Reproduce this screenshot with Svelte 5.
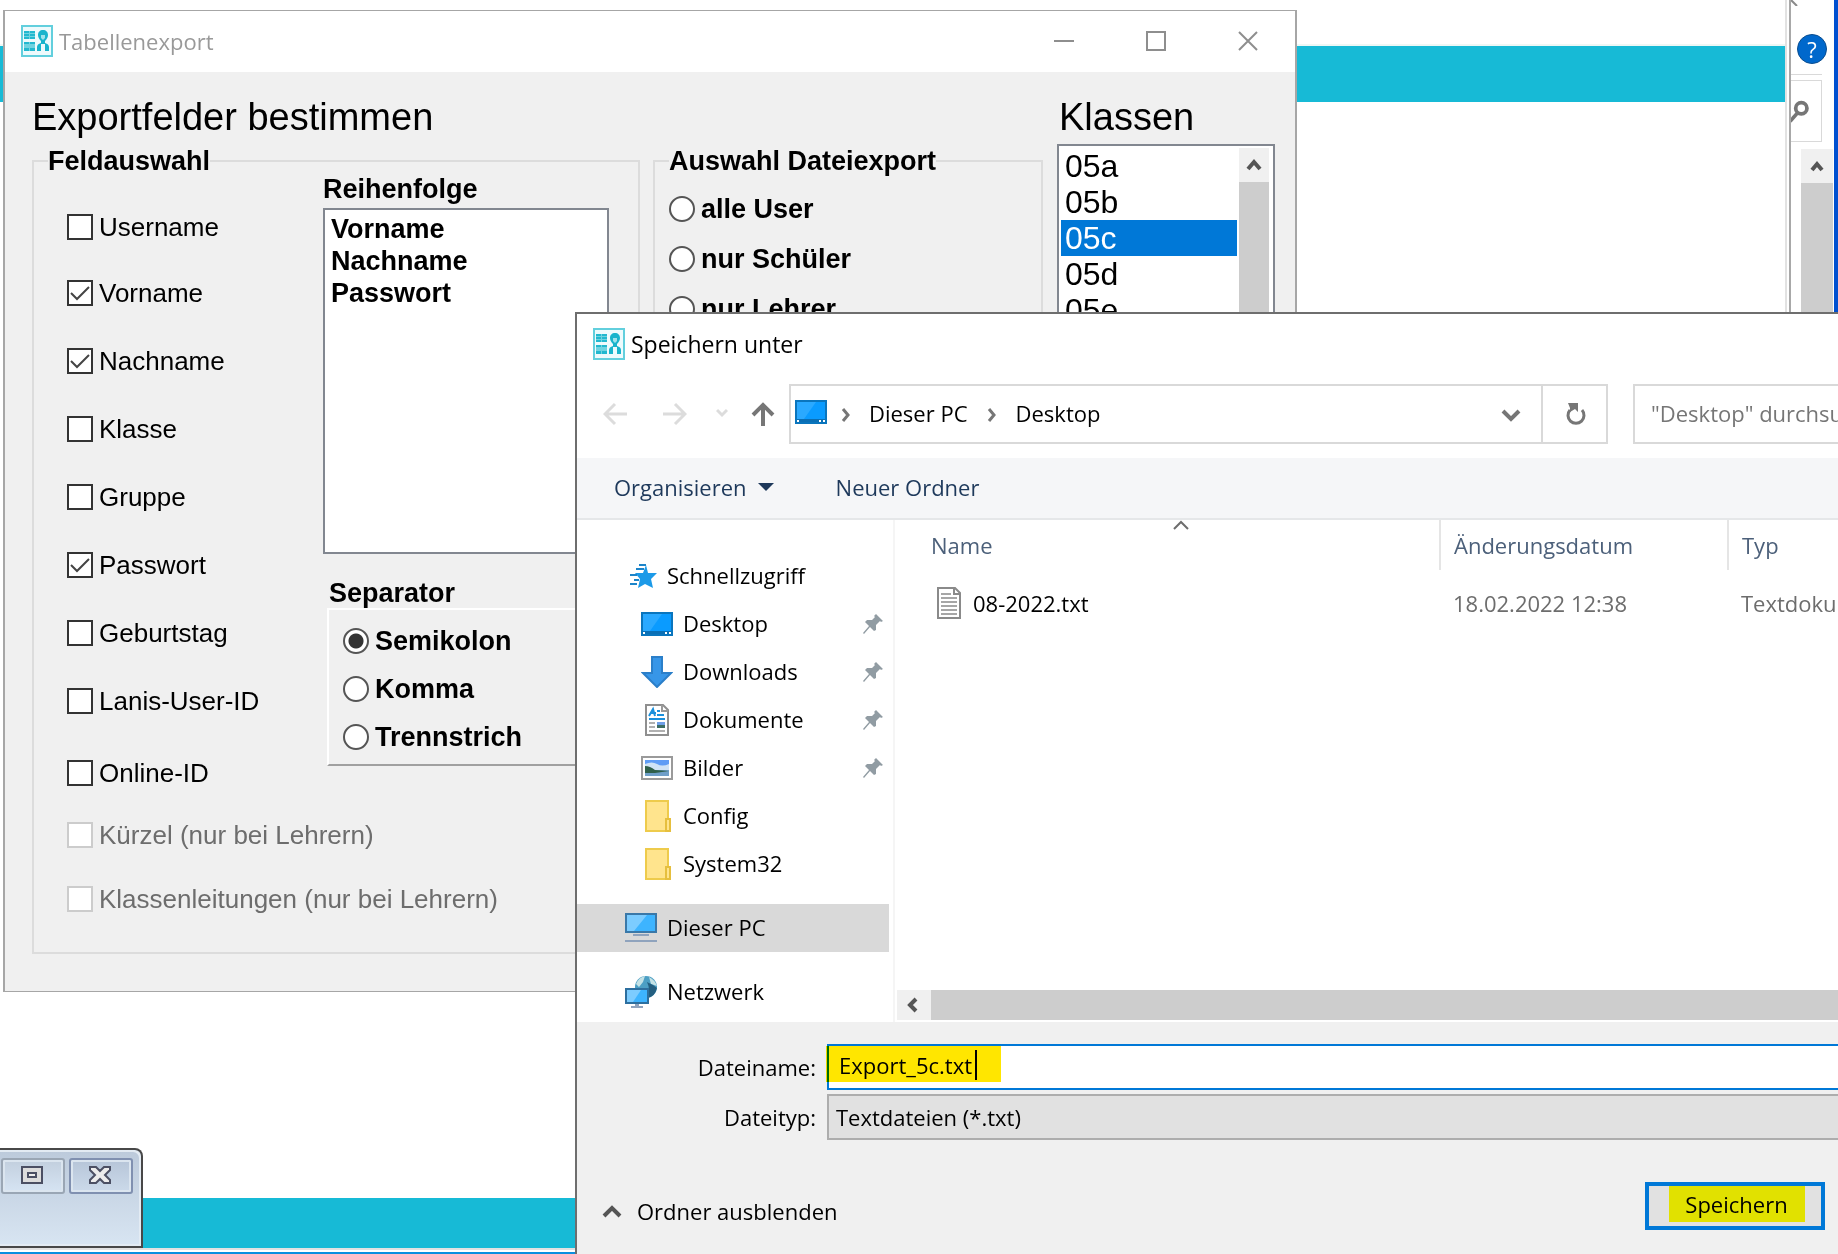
<script>
  const fields = $state([
    { label: 'Username', checked: false },
    { label: 'Vorname', checked: true },
    { label: 'Nachname', checked: true },
    { label: 'Klasse', checked: false },
    { label: 'Gruppe', checked: false },
    { label: 'Passwort', checked: true },
    { label: 'Geburtstag', checked: false },
    { label: 'Lanis-User-ID', checked: false },
    { label: 'Online-ID', checked: false },
    { label: 'Kürzel (nur bei Lehrern)', checked: false, disabled: true },
    { label: 'Klassenleitungen (nur bei Lehrern)', checked: false, disabled: true }
  ])
  const order = ['Vorname', 'Nachname', 'Passwort']
  const separators = ['Semikolon', 'Komma', 'Trennstrich']
  const targets = ['alle User', 'nur Schüler', 'nur Lehrer']
  const classes = ['05a', '05b', '05c', '05d', '05e']

  let separator = $state('Semikolon')
  let target = $state('')
  let current = $state('05c')
  let filename = $state('Export_5c.txt')

  const quick = [
    { label: 'Desktop', icon: 'desktop', pinned: true },
    { label: 'Downloads', icon: 'download', pinned: true },
    { label: 'Dokumente', icon: 'document', pinned: true },
    { label: 'Bilder', icon: 'picture', pinned: true },
    { label: 'Config', icon: 'folder' },
    { label: 'System32', icon: 'folder' }
  ]
  const files = [{ name: '08-2022.txt', date: '18.02.2022 12:38', type: 'Textdokument' }]
</script>

{#snippet appIcon()}
  <svg class="icon" viewBox="0 0 32 32" aria-hidden="true">
    <rect x="1" y="1" width="30" height="30" fill="#eefafc" stroke="#62cfdd" stroke-width="2" />
    <path fill="#6fd3e0" d="M3 6h11v8H3zM3 17h11v9H3z" />
    <path fill="#22b8cf" d="M3 6h5v2H3zM9 6h5v2H9zM3 9h5v2H3zM9 9h5v2H9zM3 12h5v2H3zM9 12h5v2H9zM3 17h5v2H3zM9 17h5v2H9zM3 23h5v3H3zM9 23h5v3H9z" />
    <!-- head, neck and the open jacket -->
    <path fill="#19b4cc" d="M22 5c3 0 5 2 5 5 0 2-1 4-3 6v3h-4v-3c-2-2-3-4-3-6 0-3 2-5 5-5z" />
    <path fill="#9fe2ea" d="M20 10h4v3l-2 2-2-2z" />
    <path fill="#19b4cc" d="M20 18v8h-4v-4q0-3 4-4zM24 18v8h4v-4q0-3-4-4z" />
  </svg>
{/snippet}

{#snippet chevron(d)}
  <svg class="chevron" viewBox="0 0 20 20" aria-hidden="true"><path {d} /></svg>
{/snippet}

{#snippet icon(name)}
  <svg class="icon" viewBox="0 0 32 32" aria-hidden="true">
    {#if name === 'desktop'}
      <rect x="1" y="5" width="30" height="22" fill="#0a9bff" stroke="#0a75bd" stroke-width="2" />
      <path fill="#2aa9ff" d="M2 6h19L9 23H2z" />
      <path fill="#0a6fb5" d="M2 23h28v3H2z" />
      <path fill="#fff" d="M2 24h2v2H2zM24 24h2v2h-2zM28 24h2v2h-2z" />
    {:else if name === 'download'}
      <path fill="#3796e8" stroke="#2b7fc9" stroke-width="2" d="M11 1h10v16h9L16 31 2 17h9z" />
    {:else if name === 'document'}
      <path fill="#fff" stroke="#8f8f8f" stroke-width="2" d="M5 1h17l5 5v25H5z" />
      <path fill="none" stroke="#9a9a9a" stroke-width="2" d="M21 1v6h6" />
      <path fill="none" stroke="#1a90dc" stroke-width="2" d="M8 12l4-7 2 7M9 9h6M16 7h3M16 11h7M8 15h16" />
      <path stroke="#b0b0b0" stroke-width="2" d="M8 19h6M8 23h6M8 27h16" />
      <path fill="#6f9fe8" d="M16 18h8v3h-8z" />
      <path fill="#3d6d63" d="M16 21h8v3h-8z" />
    {:else if name === 'picture'}
      <rect x="1" y="5" width="30" height="22" fill="#fff" stroke="#9a9a9a" stroke-width="2" />
      <path fill="#5f9cf5" d="M4 8h24v8H4z" />
      <path fill="#cfe2f5" d="M4 12q7-3 12 0t12 0v6H4z" />
      <path fill="#6f9fc9" d="M4 18h24v6H4z" />
      <path fill="#2f5f4a" d="M4 14q5 0 10 4l14 1-14 2H4z" />
    {:else if name === 'folder'}
      <path fill="#ffe48d" stroke="#eecb4c" stroke-width="2" d="M5 1h22v30H5z" />
      <path fill="#ffe48d" stroke="#e6bf3e" stroke-width="2" d="M25 19h4v12h-4z" />
    {:else if name === 'star'}
      <path fill="#1c9ae8" d="M21 5l2 8h9l-6 6 2 9-8-4-7 4 2-9-5-6h8z" />
      <path stroke="#1c84c9" stroke-width="2" d="M14 5h7M11 9h8M5 15h7M9 20h5M5 24h7" />
    {:else if name === 'pc'}
      <rect x="1" y="2" width="30" height="18" fill="#3db4ff" stroke="#3a78a8" stroke-width="2" />
      <path fill="#7cccff" d="M2 3h20L9 19H2z" />
      <path fill="#8fa3bd" d="M8 22h16v2H8zM0 28h32v2H0z" />
    {:else if name === 'network'}
      <circle cx="21" cy="11" r="11" fill="#4c9fc4" />
      <path fill="#c4e2e6" d="M11 8q3-7 9-8l-2 6-4 5zM24 1q6 3 8 9l-6-2z" />
      <path fill="#245f80" d="M22 6q4 8 0 16 8-1 10-10l-4-3z" />
      <rect x="1" y="13" width="22" height="14" fill="#3db4ff" stroke="#2d6f9f" stroke-width="2" />
      <path fill="#7cccff" d="M2 14h14L8 26H2z" />
      <path fill="#8fa3bd" d="M10 28h4v2h4v2H6v-2h4z" />
    {:else if name === 'text'}
      <path fill="#fff" stroke="#8a8a8a" stroke-width="2" d="M5 1h17l5 5v25H5z" />
      <path fill="none" stroke="#8a8a8a" stroke-width="2" d="M21 1v6h6" />
      <path stroke="#a6a6a6" stroke-width="2" d="M8 7h10M8 11h16M8 15h16M8 19h16M8 23h16M8 27h16" />
    {/if}
  </svg>
{/snippet}

<div class="desktop">
  <!-- program in the back and the explorer strip at its right -->
  <div class="backdrop">
    <div class="lanis">
      <div class="band top"></div>
      <div class="band bottom"></div>
    </div>
    <div class="explorer">
      <svg class="corner-x" viewBox="0 0 8 6" aria-hidden="true"><path d="M0 0l6 6" stroke="#8a8a8a" stroke-width="2" /></svg>
      <button class="help" aria-label="Hilfe">?</button>
      <div class="finder">
        <svg viewBox="0 0 32 60" aria-hidden="true">
          <circle cx="11" cy="27" r="6" fill="none" stroke="#767676" stroke-width="4" />
          <path d="M7 32l-8 9" stroke="#767676" stroke-width="4" />
        </svg>
      </div>
      <div class="scroll-y">
        <button aria-label="Nach oben">{@render chevron('M5 14l5-6 5 6')}</button>
      </div>
    </div>
  </div>

  <div class="mini">
    <button aria-label="Maximieren">
      <svg viewBox="0 0 22 18"><path fill="#dcdcdc" stroke="#4b4f63" stroke-width="2" d="M1 1h20v16H1z" /><path fill="#eee" stroke="#4b4f63" stroke-width="2" d="M7 7h8v4H7z" /></svg>
    </button>
    <button aria-label="Schließen">
      <svg viewBox="0 0 22 18"><path fill="#ececec" stroke="#4b4f63" stroke-width="2" d="M1 1h6l4 4 4-4h6v3l-5 5 5 5v3h-6l-4-4-4 4H1v-3l5-5-5-5z" /></svg>
    </button>
  </div>

  <section class="window export">
    <header class="titlebar">
      {@render appIcon()}
      <span class="title muted">Tabellenexport</span>
      <div class="caption">
        <button aria-label="Minimieren"><svg viewBox="0 0 20 20"><path d="M0 10h20" /></svg></button>
        <button aria-label="Maximieren"><svg viewBox="0 0 20 20"><path d="M1 1h18v18H1z" /></svg></button>
        <button aria-label="Schließen"><svg viewBox="0 0 20 20"><path d="M1 1l18 18M19 1L1 19" /></svg></button>
      </div>
    </header>

    <div class="form">
      <div class="left">
        <h1>Exportfelder bestimmen</h1>
        <div class="groups">
          <fieldset>
            <legend>Feldauswahl</legend>
            <div class="selection">
              <div class="checks">
                {#each fields as field}
                  <label class="check" class:disabled={field.disabled}>
                    <input type="checkbox" bind:checked={field.checked} disabled={field.disabled} />
                    {field.label}
                  </label>
                {/each}
              </div>
              <div>
                <div class="caption-text" id="order">Reihenfolge</div>
                <ul class="order" aria-labelledby="order">
                  {#each order as name}
                    <li>{name}</li>
                  {/each}
                </ul>
                <div class="caption-text sep" id="sep">Separator</div>
                <div class="panel" role="radiogroup" aria-labelledby="sep">
                  {#each separators as name}
                    <label class="radio"><input type="radio" name="separator" value={name} bind:group={separator} />{name}</label>
                  {/each}
                </div>
              </div>
            </div>
          </fieldset>
          <fieldset>
            <legend>Auswahl Dateiexport</legend>
            <div class="targets">
              {#each targets as name}
                <label class="radio"><input type="radio" name="target" value={name} bind:group={target} />{name}</label>
              {/each}
            </div>
          </fieldset>
        </div>
      </div>

      <div class="right">
        <h1 id="classes">Klassen</h1>
        <div class="classes">
          <ul role="listbox" aria-labelledby="classes">
            {#each classes as name}
              <li role="option" aria-selected={current === name}>
                <button onclick={() => { current = name }}>{name}</button>
              </li>
            {/each}
          </ul>
          <div class="scroll-y">
            <button aria-label="Nach oben">{@render chevron('M4 14l6-7 6 7')}</button>
          </div>
        </div>
      </div>
    </div>
  </section>

  <section class="window save">
    <header class="titlebar">
      {@render appIcon()}
      <span class="title">Speichern unter</span>
    </header>

    <nav class="address-row">
      <div class="history">
        <button aria-label="Zurück" disabled><svg viewBox="0 0 24 24"><path d="M24 12H2M12 2L2 12l10 10" /></svg></button>
        <button aria-label="Vorwärts" disabled><svg viewBox="0 0 24 24"><path d="M0 12h22M12 2l10 10-10 10" /></svg></button>
        <button class="recent" aria-label="Zuletzt besucht" disabled><svg viewBox="0 0 12 24"><path d="M1 8l5 5 5-5" /></svg></button>
        <button class="up" aria-label="Nach oben"><svg viewBox="0 0 24 24"><path d="M12 24V3M2 13L12 3l10 10" /></svg></button>
      </div>
      <div class="address">
        {@render icon('desktop')}
        {@render chevron('M7 5l5 6-5 6')}
        <a href="#pc">Dieser PC</a>
        {@render chevron('M7 5l5 6-5 6')}
        <a href="#desktop">Desktop</a>
        <button class="drop" aria-label="Verlauf">{@render chevron('M2 7l8 8 8-8')}</button>
        <button class="refresh" aria-label="Aktualisieren">
          <svg viewBox="0 0 20 24"><path fill="none" stroke="#767676" stroke-width="3" d="M4 8a8 8 0 1 0 12 0" /><path fill="#767676" d="M2 1h10v9L9 7l-5 3V6z" /></svg>
        </button>
      </div>
      <input class="search" type="text" placeholder="&quot;Desktop&quot; durchsuchen" aria-label="Suchen" />
    </nav>

    <div class="toolbar">
      <button>Organisieren <i></i></button>
      <button>Neuer Ordner</button>
    </div>

    <div class="browser">
      <aside>
        <div class="branch">
          <a class="node" href="#quick">{@render icon('star')}<span>Schnellzugriff</span></a>
          {#each quick as item}
            <a class="node child" href="#{item.label}">
              {@render icon(item.icon)}
              <span>{item.label}</span>
              {#if item.pinned}
                <svg class="pin" viewBox="0 0 20 20" aria-hidden="true">
                  <path fill="#919ca3" d="M13 0l7 7-2 1-1-1-4 4v5l-2 1-4-4-6 7-1-1 6-7-4-4 2-2h5l3-3-1-1z" />
                </svg>
              {/if}
            </a>
          {/each}
        </div>
        <a class="node current" href="#this-pc">{@render icon('pc')}<span>Dieser PC</span></a>
        <a class="node" href="#network">{@render icon('network')}<span>Netzwerk</span></a>
      </aside>

      <div class="files">
        <table>
          <thead>
            <tr>
              <th class="name">
                <svg class="sort" viewBox="0 0 16 10" aria-hidden="true"><path d="M1 9l7-7 7 7" /></svg>
                Name
              </th>
              <th class="date">Änderungsdatum</th>
              <th>Typ</th>
            </tr>
          </thead>
          <tbody>
            {#each files as file}
              <tr>
                <td class="name"><div>{@render icon('text')}<span>{file.name}</span></div></td>
                <td>{file.date}</td>
                <td>{file.type}</td>
              </tr>
            {/each}
          </tbody>
        </table>
        <div class="scroll-x">
          <button aria-label="Nach links">{@render chevron('M12 4l-6 6 6 6')}</button>
          <div class="thumb"></div>
        </div>
      </div>
    </div>

    <footer>
      <div class="row">
        <label for="filename">Dateiname:</label>
        <div class="filename">
          <input id="filename" type="text" bind:value={filename} />
          <div class="marker"></div>
          <div class="caret"></div>
        </div>
      </div>
      <div class="row">
        <label for="filetype">Dateityp:</label>
        <select id="filetype"><option>Textdateien (*.txt)</option></select>
      </div>
      <div class="actions">
        <button class="fold">{@render chevron('M2 15l8-8 8 8')}Ordner ausblenden</button>
        <button class="submit"><mark>Speichern</mark></button>
      </div>
    </footer>
  </section>
</div>

<style>
  :global(body) {
    background: #fff;
  }
  * {
    box-sizing: border-box;
  }
  .desktop {
    position: relative;
    min-height: 100vh;
    overflow: hidden;
    color: #000;
    font: 22px/30px "Open Sans", "Noto Sans", sans-serif;
  }
  button, input, select {
    margin: 0;
    font: inherit;
    color: inherit;
  }
  button {
    display: flex;
    align-items: center;
    justify-content: center;
    padding: 0;
    border: 0;
    background: none;
  }
  a {
    color: inherit;
    text-decoration: none;
  }
  ul {
    margin: 0;
    padding: 0;
    list-style: none;
  }
  .icon {
    flex: none;
    width: 32px;
    height: 32px;
  }
  .chevron {
    flex: none;
    width: 20px;
    height: 20px;
    fill: none;
    stroke: #555;
    stroke-width: 4;
  }

  /* backdrop */
  .backdrop {
    display: flex;
    height: 100vh;
  }
  .lanis {
    flex: 1;
    display: flex;
    flex-direction: column;
    justify-content: space-between;
    padding-top: 44px;
    border-right: 2px solid #e2e2e2;
    border-bottom: 2px solid #0a8fe0;
  }
  .band {
    background: #17bad6;
  }
  .band.top {
    height: 58px;
    border-top: 2px solid #eef7f5;
  }
  .band.bottom {
    height: 52px;
    margin-bottom: 2px;
    border-bottom: 2px solid #e2e2e2;
  }
  .explorer {
    display: flex;
    flex-direction: column;
    width: 49px;
    margin-left: 2px;
    border-left: 2px solid #a8a8a8;
    border-right: 4px solid #0050d0;
  }
  .corner-x {
    width: 8px;
    height: 6px;
  }
  .help {
    width: 30px;
    height: 30px;
    margin: 28px 0 10px 6px;
    border: 1px solid #0a4d8f;
    border-radius: 50%;
    background: #0068cc;
    color: #fff;
  }
  .finder {
    width: 31px;
    height: 68px;
    padding-top: 5px;
    border-top: 1px solid #d9d9d9;
  }
  .finder svg {
    display: block;
    width: 31px;
    height: 62px;
    border: 1px solid #d9d9d9;
    border-left: 0;
  }
  .explorer .scroll-y {
    flex: 1;
    width: 32px;
    margin: 7px 0 0 10px;
  }
  .scroll-y {
    background: #cdcdcd;
  }
  .scroll-y button {
    width: 100%;
    height: 34px;
    background: #f0f0f0;
  }
  .mini {
    position: absolute;
    left: 0;
    bottom: 6px;
    display: flex;
    align-items: flex-start;
    gap: 4px;
    height: 100px;
    padding: 6px 8px 0 1px;
    border: 2px solid #484848;
    border-left: 0;
    border-top-right-radius: 8px;
    background: linear-gradient(#bccadb, #d8e5f2);
    box-shadow: inset -2px 2px #e3ebf3, inset 0 -2px #e3ebf3;
  }
  .mini button {
    width: 64px;
    height: 36px;
    margin-top: 2px;
    padding: 0 2px 2px 0;
    border: 2px solid #9aa6b4;
    border-radius: 3px;
    background: linear-gradient(#c2cfde, #d6e4f3);
    box-shadow: inset 0 0 0 2px #dbe5ef;
  }
  .mini button + button {
    border-color: #8090b0;
    background: linear-gradient(#b6c5d8, #ccdaea);
  }
  .mini svg {
    width: 22px;
    height: 18px;
  }

  /* windows */
  .window {
    position: absolute;
    background: #fff;
  }
  .titlebar {
    display: flex;
    align-items: center;
    gap: 6px;
    height: 61px;
    padding-bottom: 2px;
  }
  .muted {
    color: #999;
  }
  .export {
    top: 10px;
    left: 3px;
    right: 541px;
    border: solid #a6a6a6;
    border-width: 1px 2px;
    font-family: "Liberation Sans", Arial, sans-serif;
  }
  .export .titlebar {
    padding: 0 37px 2px 16px;
  }
  .export .title {
    font-family: "Open Sans", "Noto Sans", sans-serif;
  }
  .caption {
    display: flex;
    gap: 72px;
    margin-left: auto;
  }
  .caption svg {
    display: block;
    width: 20px;
    height: 20px;
    fill: none;
    stroke: #8e8e8e;
    stroke-width: 2;
  }
  .form {
    display: grid;
    grid-template-columns: 1fr 218px;
    gap: 14px;
    padding: 23px 20px 37px 27px;
    background: #f0f0f0;
  }
  h1 {
    margin: 0;
    font-size: 38px;
    font-weight: 400;
    line-height: 44px;
    white-space: nowrap;
  }
  .right h1 {
    padding-left: 2px;
  }
  .groups {
    display: grid;
    grid-template-columns: 608px 1fr;
    gap: 13px;
    margin-top: 7px;
  }
  fieldset {
    min-width: 0;
    margin: 0;
    padding: 0 14px 40px;
    border: 2px solid #dcdcdc;
  }
  legend {
    padding: 0;
    font-size: 27px;
    font-weight: 700;
    line-height: 30px;
  }
  .selection {
    display: grid;
    grid-template-columns: 256px 286px;
    margin-left: 19px;
    font-size: 27px;
  }
  .checks {
    display: grid;
    grid-template-rows: 66px repeat(6, 68px) 72px 62px 64px 26px;
    margin-top: 38px;
    font-size: 26px;
  }
  .check, .radio {
    display: flex;
    align-items: center;
    gap: 6px;
    white-space: nowrap;
  }
  .check {
    height: 26px;
  }
  .check.disabled {
    color: #6d6d6d;
  }
  .check input, .radio input {
    appearance: none;
    flex: none;
    width: 26px;
    height: 26px;
    border: 2px solid #333;
    background: #fff center / 22px no-repeat;
  }
  .check input:checked {
    background-image: url("data:image/svg+xml,%3Csvg xmlns='http://www.w3.org/2000/svg' viewBox='0 0 22 22'%3E%3Cpath d='M2 11l6 6L20 5' fill='none' stroke='%23444' stroke-width='2'/%3E%3C/svg%3E");
  }
  .check input:disabled {
    border-color: #ccc;
  }
  .radio {
    height: 48px;
    font-size: 27px;
    font-weight: 700;
  }
  .radio input {
    border-radius: 50%;
    border-color: #555;
  }
  .radio input:checked {
    background: radial-gradient(circle, #333 7px, #fff 8px);
  }
  .targets .radio {
    height: 50px;
  }
  .targets {
    padding-top: 8px;
  }
  .caption-text {
    font-weight: 700;
    line-height: 26px;
  }
  .caption-text.sep {
    margin: 26px 0 2px 6px;
  }
  .order {
    height: 346px;
    margin-top: 6px;
    padding: 3px 6px;
    border: 2px solid #828790;
    background: #fff;
    font-weight: 700;
    line-height: 32px;
  }
  .panel {
    margin-left: 4px;
    padding: 7px 14px 3px;
    border: solid #fff;
    border-width: 2px 0 2px 2px;
    border-bottom-color: #a0a0a0;
  }
  .classes {
    display: flex;
    gap: 2px;
    height: 346px;
    margin-top: 5px;
    padding: 2px 4px 2px 2px;
    border: 2px solid #828790;
    background: #fff;
  }
  .classes ul {
    flex: 1;
  }
  .classes li button {
    justify-content: flex-start;
    width: 100%;
    height: 36px;
    padding-left: 4px;
    font-size: 32px;
  }
  .classes li[aria-selected="true"] button {
    background: #0078d7;
    color: #fff;
  }
  .classes .scroll-y {
    width: 30px;
  }

  /* save dialog */
  .save {
    top: 312px;
    left: 575px;
    right: 0;
    bottom: 0;
    display: flex;
    flex-direction: column;
    border: solid #6e6e6e;
    border-width: 2px 0 0 2px;
  }
  .save .titlebar {
    padding: 0 16px 2px;
    font-size: 23px;
  }
  .address-row {
    display: flex;
    align-items: center;
    height: 83px;
    padding-bottom: 5px;
  }
  .history {
    display: flex;
    align-items: center;
    width: 172px;
    margin: 0 14px 0 26px;
  }
  .history button + button {
    margin-left: 36px;
  }
  .history .recent:not(.up) {
    margin-left: 29px;
  }
  .history button.up {
    margin-left: auto;
  }
  .history svg {
    display: block;
    width: 24px;
    height: 24px;
    fill: none;
    stroke: #dcdcdc;
    stroke-width: 3;
  }
  .history .recent svg {
    width: 12px;
  }
  .history .up svg {
    stroke: #767676;
    stroke-width: 4;
  }
  .address {
    flex: 1;
    display: flex;
    align-items: center;
    height: 60px;
    padding-left: 4px;
    border: 2px solid #d9d9d9;
  }
  .address > .icon {
    margin-bottom: 4px;
  }
  .address a {
    padding-bottom: 2px;
  }
  .address > .chevron {
    margin: 0 13px 0 9px;
    stroke: #767676;
    stroke-width: 3;
  }
  .address a + .chevron {
    margin: 0 14px;
  }
  .drop {
    margin: 0 20px 0 auto;
  }
  .drop .chevron {
    stroke: #767676;
  }
  .refresh {
    width: 65px;
    height: 56px;
    padding-left: 2px;
    border-left: 2px solid #d9d9d9;
  }
  .refresh svg {
    width: 20px;
    height: 24px;
  }
  .search {
    width: 205px;
    height: 60px;
    margin-left: 25px;
    padding: 0 0 2px 16px;
    border: 2px solid #d9d9d9;
    border-right: 0;
    border-radius: 0;
    background: #fff;
  }
  .search::placeholder {
    color: #767676;
  }
  .toolbar {
    display: flex;
    gap: 62px;
    height: 62px;
    padding: 0 0 2px 37px;
    border-bottom: 2px solid #e5e7e9;
    background: #f5f6f8;
    color: #1e395b;
  }
  .toolbar i {
    margin-left: 11px;
    border: solid transparent;
    border-width: 8px 8px 0;
    border-top-color: #1e395b;
  }
  .browser {
    flex: 1;
    display: flex;
    min-height: 0;
  }
  aside {
    display: flex;
    flex-direction: column;
    gap: 16px;
    width: 318px;
    padding: 32px 4px 0 0;
    border-right: 2px solid #f5f5f5;
  }
  .node {
    display: flex;
    align-items: center;
    gap: 10px;
    height: 48px;
    padding: 0 6px 0 48px;
  }
  .node.child {
    padding-left: 64px;
  }
  .node span {
    padding-bottom: 3px;
  }
  .node.current {
    background: #d9d9d9;
  }
  .pin {
    width: 20px;
    height: 20px;
    margin-left: auto;
  }
  .files {
    flex: 1;
    display: flex;
    flex-direction: column;
    justify-content: space-between;
    min-width: 0;
    padding: 0 0 2px 2px;
  }
  table {
    width: 100%;
    border-collapse: collapse;
    table-layout: fixed;
    color: #6d6d6d;
  }
  th, td {
    overflow: hidden;
    padding: 0 0 0 13px;
    text-align: left;
    font-weight: 400;
    white-space: nowrap;
  }
  th {
    position: relative;
    height: 50px;
    border-right: 2px solid #e5e5e5;
    color: #4c607a;
  }
  th:last-child {
    border-right: 0;
  }
  .name {
    width: 543px;
    padding-left: 34px;
  }
  .date {
    width: 288px;
  }
  .sort {
    position: absolute;
    top: 0;
    left: 51%;
    width: 16px;
    height: 10px;
    fill: none;
    stroke: #6d6d6d;
    stroke-width: 2;
  }
  td {
    height: 66px;
  }
  td div {
    display: flex;
    align-items: center;
    gap: 8px;
    padding-left: 2px;
    color: #000;
  }
  .scroll-x {
    display: flex;
    height: 30px;
    background: #f0f0f0;
  }
  .scroll-x button {
    width: 34px;
  }
  .thumb {
    flex: 1;
    background: #cdcdcd;
  }
  footer {
    display: flex;
    flex-direction: column;
    gap: 4px;
    padding-top: 22px;
    background: #f0f0f0;
  }
  .row {
    display: flex;
    align-items: center;
  }
  .row label {
    width: 250px;
    padding-right: 11px;
    text-align: right;
  }
  .filename {
    position: relative;
    flex: 1;
  }
  .filename input, select {
    display: block;
    width: 100%;
    height: 46px;
    border: 2px solid #0078d7;
    border-right: 0;
    border-radius: 0;
  }
  .filename input {
    padding: 0 0 4px 10px;
    background: #fff;
  }
  .marker {
    position: absolute;
    top: 2px;
    left: -1px;
    width: 175px;
    height: 36px;
    background: #ffe600;
    mix-blend-mode: multiply;
    pointer-events: none;
  }
  .caret {
    position: absolute;
    top: 6px;
    left: 148px;
    width: 2px;
    height: 30px;
    background: #000;
  }
  select {
    appearance: none;
    flex: 1;
    padding: 0 0 0 7px;
    border-color: #adadad;
    background: #e1e1e1;
  }
  .actions {
    display: flex;
    align-items: center;
    justify-content: space-between;
    height: 110px;
    padding: 24px 13px 10px 25px;
  }
  .fold {
    gap: 15px;
    padding-top: 10px;
  }
  .submit {
    align-items: flex-start;
    width: 180px;
    height: 48px;
    padding-left: 3px;
    border: 4px solid #0078d7;
    background: #e1e1e1;
  }
  mark {
    width: 136px;
    height: 36px;
    background: #e1e100;
    color: #000;
    line-height: 36px;
  }
</style>
